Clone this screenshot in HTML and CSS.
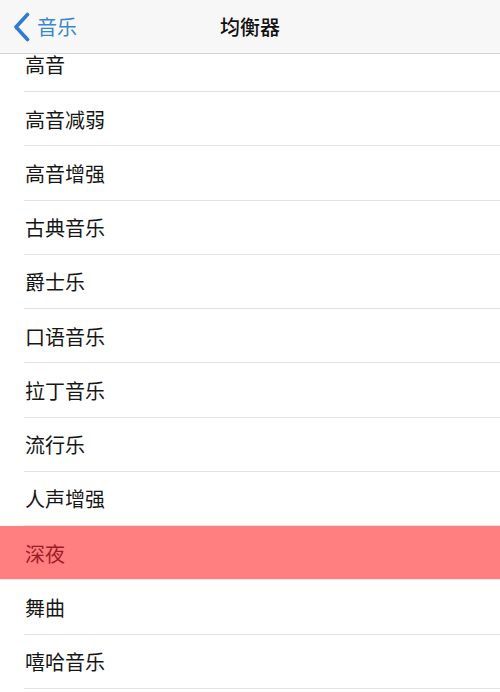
FILE: index.html
```html
<!DOCTYPE html>
<html lang="zh">
<head>
<meta charset="utf-8">
<title>均衡器</title>
<link rel="stylesheet" href="styles.css">
</head>
<body>
<div class="screen">
  <header class="navbar">
    <a class="back">
      <svg class="chev" width="18" height="30" viewBox="0 0 18 30"><path d="M14.5 2.5 L3 15 L14.5 27.5" fill="none" stroke="#2f7bd2" stroke-width="3.6" stroke-linecap="round" stroke-linejoin="round"/></svg>
      <span class="back-text">音乐</span>
    </a>
    <h1 class="title">均衡器</h1>
  </header>
  <ul class="list">
    <li class="row">高音</li>
    <li class="row">高音减弱</li>
    <li class="row">高音增强</li>
    <li class="row">古典音乐</li>
    <li class="row">爵士乐</li>
    <li class="row">口语音乐</li>
    <li class="row">拉丁音乐</li>
    <li class="row">流行乐</li>
    <li class="row">人声增强</li>
    <li class="row selected">深夜</li>
    <li class="row">舞曲</li>
    <li class="row">嘻哈音乐</li>
  </ul>
</div>
</body>
</html>
```
FILE: styles.css
```css
* { box-sizing: border-box; }
html, body { margin: 0; padding: 0; }
body {
  width: 500px;
  height: 692px;
  overflow: hidden;
  background: #ffffff;
  font-family: "Noto Sans CJK SC", "Noto Sans", sans-serif;
}
.screen {
  position: relative;
  height: 692px;
  overflow: hidden;
}
.navbar {
  position: relative;
  z-index: 2;
  height: 54px;
  background: #f7f7f7;
  border-bottom: 1px solid #d6d6d6;
  display: flex;
  align-items: center;
  justify-content: center;
}
.back {
  position: absolute;
  left: 13px;
  top: 12px;
  display: flex;
  align-items: center;
  gap: 6px;
  color: #2f7bd2;
}
.chev { display: block; }
.back-text {
  font-size: 20px;
  line-height: 28px;
  color: #3a86cf;
}
.title {
  margin: 0;
  font-size: 20px;
  font-weight: 500;
  color: #111;
  line-height: 28px;
}
.list {
  list-style: none;
  margin: -16.25px 0 0 0;
  padding: 0;
}
.row {
  height: 54.25px;
  padding-left: 25px;
  display: flex;
  align-items: center;
  font-size: 20px;
  color: #161616;
  position: relative;
}
.row::after {
  content: "";
  position: absolute;
  left: 24px;
  right: 0;
  bottom: 0;
  height: 1px;
  background: #e2e2e2;
}
.row.selected {
  background: #ff7e80;
  color: #9c1c26;
}
.row.selected::after { background: #fbe4e6; left: 0; }
```
